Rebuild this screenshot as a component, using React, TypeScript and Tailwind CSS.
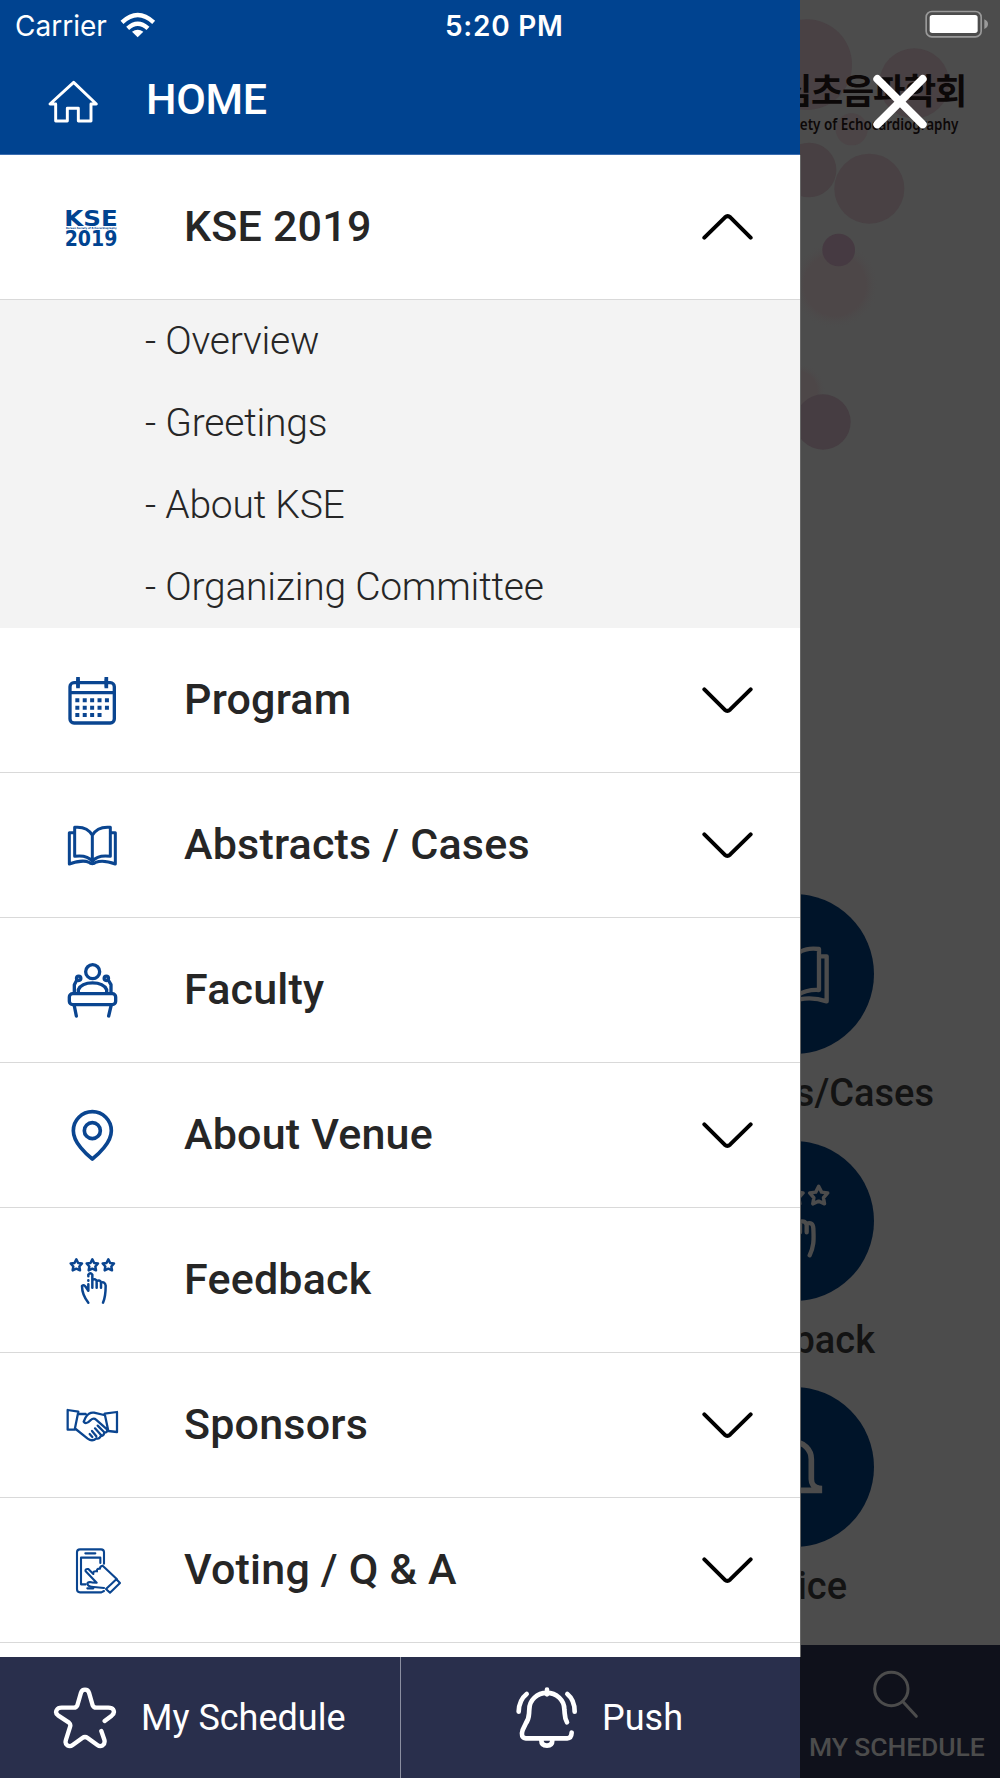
import type { ReactNode } from "react";

const BLUE = "#004390";

function Icon({ box, w, children, className = "h-16 w-16" }: { box: string; w: number; children: ReactNode; className?: string }) {
  return (
    <svg viewBox={box} className={`shrink-0 ${className}`} fill="none" stroke="currentColor" strokeWidth={w} strokeLinecap="round" strokeLinejoin="round">
      {children}
    </svg>
  );
}

const KseLogo = () => (
  <svg viewBox="180 585 192 192" className="h-16 w-16 shrink-0" fill={BLUE} fontFamily="'DejaVu Sans', sans-serif" fontWeight="700">
    <text x="193" y="678" fontSize="66" textLength="160" lengthAdjust="spacingAndGlyphs">KSE</text>
    <text x="198" y="688" fontSize="8" textLength="152" lengthAdjust="spacingAndGlyphs">Korean Society of Echocardiography</text>
    <text x="194" y="738" fontSize="61" textLength="158" lengthAdjust="spacingAndGlyphs">2019</text>
  </svg>
);

const CalendarIcon = () => (
  <Icon box="60 24 192 192" w={10}>
    <rect x="90" y="68" width="133" height="121" rx="12" />
    <path d="M90 98H223M114 56V80M199 56V80" strokeLinecap="butt" />
    <path d="M114 51V85M199 51V85" strokeWidth="11" strokeLinecap="butt" />
    <path d="M106 121H208M106 143H208M106 165H186" strokeWidth="12" strokeDasharray="12 10.2" strokeLinecap="butt" />
  </Icon>
);

const BookIcon = () => (
  <Icon box="60 459 192 192" w={9}>
    <path d="M157 526C146 506 125 500 104 502V589C125 586 146 590 157 604C168 590 189 586 211 589V502C190 500 168 506 157 526V604" />
    <path d="M102 518H88V612C112 603 136 602 147 607C152 613 162 613 167 607C180 602 202 603 226 612V518H213" />
  </Icon>
);

const PodiumIcon = () => (
  <Icon box="60 54 192 192" w={10}>
    <circle cx="158" cy="95" r="21" />
    <rect x="88" y="161" width="139" height="33" rx="10" />
    <path d="M115 159V149C128 122 187 122 200 149V159M103 158V134L111 119M213 158V134L204 119M103 198L109 228M213 198L206 228" />
    <circle cx="116" cy="115" r="6.5" />
    <circle cx="199" cy="115" r="6.5" />
  </Icon>
);

const PinIcon = () => (
  <Icon box="60 489 192 192" w={11}>
    <path d="M157 657C140 644 100 608 100 572A57 57 0 0 1 214 572C214 608 174 644 157 657Z" />
    <circle cx="157" cy="572" r="24" />
  </Icon>
);

const STAR = "M0 -17L5.5 -6L17 -4.5L9 4.5L11 16L0 11L-11 16L-9 4.5L-17 -4.5L-5.5 -6Z";

const FeedbackIcon = () => (
  <Icon box="60 24 192 192" w={7.5}>
    <path d={STAR} transform="translate(109 75)" />
    <path d={STAR} transform="translate(157 75)" />
    <path d={STAR} transform="translate(205 75)" />
    <path d="M145 188C137 178 126 160 126 138Q133 132 138 142L145 152V133M145 122V121M145 109V104Q151 95 157 104V143M157 120Q168 114 170 124V143M170 123Q181 118 183 128V143M183 128Q195 124 197 137C197 156 196 172 189 188" />
  </Icon>
);

const HandshakeIcon = () => (
  <Icon box="60 459 192 192" w={6.8}>
    <path d="M83 510L115 515L104 569H83ZM231 516L194 521L205 573L231 576ZM115 522H137M107 567L143 596Q157 606 169 595Q179 598 182 588Q191 589 193 578Q202 578 202 569M192 525L162 518Q147 516 137 532L131 545Q137 555 151 541Q161 532 168 539L202 569M149 582L157 591M156 573L169 589M165 565L183 585M173 557L192 576" />
  </Icon>
);

const VotingIcon = () => (
  <Icon box="60 24 192 192" w={6.3}>
    <path d="M192 101V67Q192 58 183 58H120Q111 58 111 67V178Q111 187 120 187H184L192 183" />
    <path d="M136 70H166M181 99V83H123V163H137M142 175H160" />
    <path d="M192 174L161 171Q144 170 142 161Q143 155 155 157L170 158L137 124Q134 116 145 117L160 132Q158 122 171 124Q169 115 180 116Q179 109 188 107L231 148M229 148L240 159L210 188L198 177Z" />
  </Icon>
);

const HomeIcon = () => (
  <Icon box="144 240 153 132" w={8.8} className="h-[44px] w-[51px]">
    <path d="M167 312H150L221 247L289 312H273V363H235V325H202V363H167Z" />
  </Icon>
);

const StarIcon = () => (
  <Icon box="36 468 198 192" w={13} className="h-[64px] w-[66px]">
    <path d="M194 573L215 557Q226 548 219 538Q216 533 205 533H169Q161 533 158 526L147 488Q144 479 135 479Q126 479 123 488L112 526Q109 533 101 533H65Q54 533 50 540Q45 549 54 556L87 578Q93 583 90 591L78 629Q74 641 82 646Q90 651 98 645L127 624Q135 618 143 624L172 645Q180 651 188 646Q196 640 193 629L184 603" />
  </Icon>
);

const BellIcon = () => (
  <Icon box="102 498 198 192" w={14} className="h-[64px] w-[66px]">
    <path d="M261 607C253 594 255 584 253 568A52 49 0 0 0 148 568C146 588 149 594 137 611L128 630Q120 653 138 655H262Q274 655 275 638M201 509V523M184 661Q184 677 201 677Q217 677 217 661M116 575Q117 540 140 522M284 575Q284 540 262 522" />
  </Icon>
);

const Chevron = ({ up = false }: { up?: boolean }) => (
  <Icon box="663 108 159 84" w={12} className={up ? "h-7 w-[53px] rotate-180" : "h-7 w-[53px]"}>
    <path d="M673 118L734 179Q742 186 750 179L812 118" />
  </Icon>
);

type Row = { label: string; icon: ReactNode; open?: boolean; expandable?: boolean };

const rows: Row[] = [
  { label: "KSE 2019", icon: <KseLogo />, open: true, expandable: true },
  { label: "Program", icon: <CalendarIcon />, expandable: true },
  { label: "Abstracts / Cases", icon: <BookIcon />, expandable: true },
  { label: "Faculty", icon: <PodiumIcon /> },
  { label: "About Venue", icon: <PinIcon />, expandable: true },
  { label: "Feedback", icon: <FeedbackIcon /> },
  { label: "Sponsors", icon: <HandshakeIcon />, expandable: true },
  { label: "Voting / Q & A", icon: <VotingIcon />, expandable: true },
];

const subItems = ["Overview", "Greetings", "About KSE", "Organizing Committee"];

function MenuRow({ row }: { row: Row }) {
  return (
    <>
      <div className="flex h-[145px] shrink-0 items-center border-b border-[#d9d9d9] pr-[46px] pl-[60px]">
        <span className="text-[#0a4590]">{row.icon}</span>
        <span className="ml-[60px] flex-1 pb-[2px] text-[43px] leading-none font-medium tracking-[0.2px] text-[#262626]">{row.label}</span>
        {row.expandable && <span className="text-black"><Chevron up={row.open} /></span>}
      </div>
      {row.open && (
        <ul className="shrink-0 bg-[#f3f3f3] pl-[145px] text-[39px] font-light tracking-[-0.22px] text-[#262626]">
          {subItems.map((s) => (
            <li key={s} className="flex h-[82px] items-center pt-px">- {s}</li>
          ))}
        </ul>
      )}
    </>
  );
}

function Drawer() {
  return (
    <div className="z-10 flex h-full w-[800px] shrink-0 flex-col bg-white">
      <header className="h-[155px] shrink-0 border-b border-[#3a6db0] bg-[#004390] text-white">
        <div className="flex h-[50px] items-center font-[Inter,sans-serif] text-[28px]">
          <span className="w-[107px] pt-[2px] pl-[15px]">Carrier</span>
          <svg viewBox="360 33 108 78" className="ml-[13px] h-[26px] w-9 shrink-0" fill="none" stroke="white" strokeWidth="13">
            <path d="M366 64Q413 20 461 64M383 82Q413 54 444 82" />
            <path d="M396 92Q413 80 430 92L413 109Z" fill="white" stroke="none" />
          </svg>
          <span className="ml-[289px] pt-[2px] whitespace-nowrap text-[28px] font-semibold tracking-[0.75px]">5:20 PM</span>
        </div>
        <div className="flex h-[104px] items-start pl-[48px]">
          <span className="mt-[30px]"><HomeIcon /></span>
          <span className="mt-[28px] ml-[47px] text-[43px] leading-none font-medium tracking-[-0.3px]">HOME</span>
        </div>
      </header>
      <nav className="flex min-h-0 flex-1 flex-col overflow-hidden shadow-[1px_0_0_#666]">
        {rows.map((r) => <MenuRow key={r.label} row={r} />)}
      </nav>
      <footer className="flex h-[121px] shrink-0 bg-[#292f4c] text-[36px] text-white">
        <div className="flex w-[401px] items-center border-r border-[#8b8fa0] pl-[52px]">
          <StarIcon />
          <span className="ml-[23px]">My Schedule</span>
        </div>
        <div className="flex flex-1 items-center pl-[113px]">
          <BellIcon />
          <span className="ml-[22px]">Push</span>
        </div>
      </footer>
    </div>
  );
}

function Bubbles() {
  return (
    <svg viewBox="60 0 600 1350" className="absolute top-0 left-0 h-[450px] w-[200px]">
      <defs>
        <radialGradient id="soft">
          <stop offset="0.7" stopColor="#4d4748" />
          <stop offset="1" stopColor="#4c4c4c" stopOpacity="0" />
        </radialGradient>
      </defs>
      <circle cx="80" cy="194" r="136" fill="#494144" />
      <circle cx="403" cy="250" r="105" fill="#494144" />
      <circle cx="215" cy="388" r="48" fill="#4c4547" />
      <circle cx="87" cy="510" r="82" fill="#484043" />
      <circle cx="268" cy="566" r="105" fill="#494144" />
      <circle cx="165" cy="855" r="132" fill="url(#soft)" />
      <circle cx="176" cy="750" r="49" fill="#463a42" />
      <circle cx="50" cy="1175" r="88" fill="url(#soft)" />
      <circle cx="129" cy="1266" r="83" fill="#463d42" />
    </svg>
  );
}

function Tile({ label, labelWidth, box, w, children }: { label: string; labelWidth: string; box: string; w: number; children: ReactNode }) {
  return (
    <div className="h-[246.7px] shrink-0">
      <div className="-ml-[86px] h-40 w-40 rounded-full bg-[#001429] text-[#4c4c4c]">
        <Icon box={box} w={w} className="h-40 w-40">{children}</Icon>
      </div>
      <div className={`mt-[17px] flex justify-end text-[38px] leading-[44px] font-medium whitespace-nowrap text-[#131313] ${labelWidth}`}>{label}</div>
    </div>
  );
}

function DimmedPage() {
  return (
    <div className="relative flex h-full w-[200px] flex-col overflow-hidden bg-[#4c4c4c]">
      <Bubbles />
      <div className="relative flex h-[50px] shrink-0 justify-end pt-[10px] pr-[11px]">
        <svg viewBox="435 30 192 86" className="h-[28.7px] w-16" fill="none">
          <rect x="438.500" y="34.500" width="165" height="76" rx="17" stroke="#999" strokeWidth="5" />
          <rect x="449" y="45" width="144" height="54" rx="8" fill="white" />
          <path d="M613 58Q624 63 624 72Q624 82 613 87Z" fill="#999" />
        </svg>
      </div>
      <div className="relative flex h-[844px] shrink-0 flex-col items-end whitespace-nowrap text-[#0c0808]">
        <div className="mt-[19px] mr-[34px] font-['Noto_Sans_CJK_KR',sans-serif] text-[35px] leading-[40px] font-bold tracking-[-1.2px]">심초음파학회</div>
        <div className="mt-[6px] mr-[42px] origin-right scale-x-[0.86] font-['Noto_Sans',sans-serif] text-[15.600px] leading-[18px] font-semibold">ety of Echocardiography</div>
        <svg viewBox="270 216 180 180" className="absolute top-[22px] left-[70px] h-[60px] w-[60px]" stroke="white" strokeWidth="24" strokeLinecap="round">
          <path d="M292 237L428 373M428 237L292 373" />
        </svg>
      </div>
      <Tile label="s/Cases" labelWidth="w-[134px]" box="-198 42 480 480" w={13}>
        <path d="M42 232C62 206 95 204 117 207V330C95 328 62 334 42 354C22 334 -11 328 -33 330V207C-11 204 22 206 42 232Z" />
        <path d="M124 229H140V364C105 352 75 352 42 362C9 352 -21 352 -56 364V229H-40" />
      </Tile>
      <Tile label="back" labelWidth="w-[75px]" box="-198 783 480 480" w={13}>
        <path d={STAR} transform="translate(116 946) scale(1.6)" strokeWidth="6.500" />
        <path d={STAR} transform="translate(42 946) scale(1.6)" strokeWidth="6.500" />
        <path d="M60 1025Q78 1021 80 1036V1057M80 1031Q99 1025 100 1045C102 1085 101 1100 89 1126M60 1025V1057" />
      </Tile>
      <Tile label="ice" labelWidth="w-[47px]" box="-198 443 480 480" w={17}>
        <path d="M-40 753H118V747C100 745 94 731 94 720V660A52 52 0 0 0 -10 660V720C-10 731 -18 747 -36 750" strokeLinecap="butt" strokeLinejoin="miter" />
      </Tile>
      <div className="absolute bottom-0 left-0 flex h-[133px] w-full flex-col bg-[#0f111b] text-[#4c4c4c]">
        <Icon box="1176 447 147 153" w={9} className="mt-[24px] ml-[71px] h-[51px] w-[49px]">
          <circle cx="1237" cy="507" r="50" />
          <path d="M1272 545L1312 589" />
        </Icon>
        <span className="mt-[11px] ml-[9px] whitespace-nowrap text-[26.500px] leading-8 font-medium tracking-[-0.1px]">MY SCHEDULE</span>
      </div>
    </div>
  );
}

export default function App() {
  return (
    <div className="flex h-[1778px] w-[1000px] overflow-hidden font-[Roboto,sans-serif]">
      <Drawer />
      <DimmedPage />
    </div>
  );
}
